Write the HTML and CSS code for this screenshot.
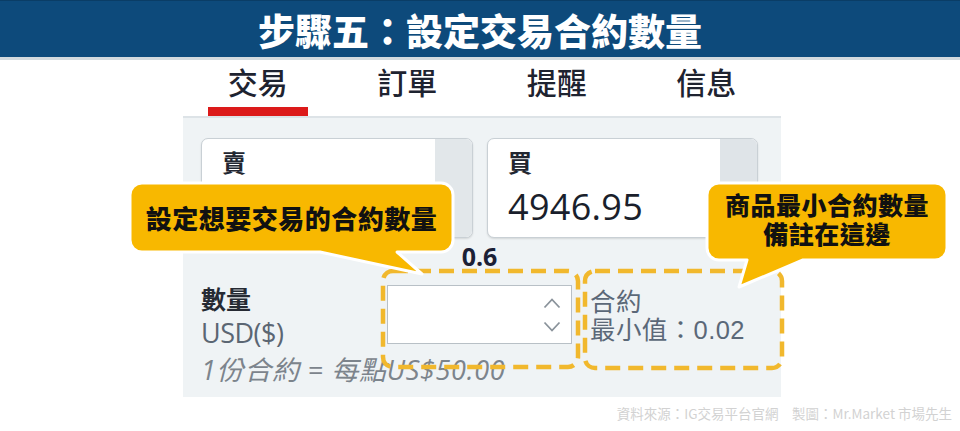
FILE: index.html
```html
<!DOCTYPE html>
<html lang="zh-Hant">
<head>
<meta charset="utf-8">
<title>步驟五：設定交易合約數量</title>
<link rel="stylesheet" href="styles.css">
</head>
<body>
<div class="page">
  <header class="banner"><h1 class="banner-title">步驟五：設定交易合約數量</h1></header>

  <main class="main">
    <nav class="tabs">
      <div class="tab tab-active"><span class="tab-label">交易</span><span class="tab-bar"></span></div>
      <div class="tab"><span class="tab-label">訂單</span></div>
      <div class="tab"><span class="tab-label">提醒</span></div>
      <div class="tab"><span class="tab-label">信息</span></div>
    </nav>

    <section class="panel">
      <div class="cards">
        <div class="card">
          <div class="card-body"><div class="card-label">賣</div></div>
          <div class="card-side card-side-sell"></div>
        </div>
        <div class="card">
          <div class="card-body"><div class="card-label">買</div><div class="card-price">4946.95</div></div>
          <div class="card-side"></div>
        </div>
      </div>

      <div class="qty-value-row"><span class="qty-value">0.6</span></div>

      <div class="qty-row">
        <div class="qty-labels">
          <div class="qty-title">數量</div>
          <div class="qty-unit">USD($)</div>
        </div>
        <div class="qty-input">
          <svg class="spin" width="18" height="40" viewBox="0 0 18 40">
            <polyline points="1.5,12.5 9,4.5 16.5,12.5" fill="none" stroke="#8a939b" stroke-width="1.8"/>
            <polyline points="1.5,27.5 9,35.5 16.5,27.5" fill="none" stroke="#8a939b" stroke-width="1.8"/>
          </svg>
        </div>
        <div class="qty-note">
          <div>合約</div>
          <div>最小值：0.02</div>
        </div>
      </div>
      <div class="qty-hint">1份合約 = 每點US$50.00</div>
    </section>
  </main>

  <footer class="credit">資料來源：IG交易平台官網　製圖：Mr.Market 市場先生</footer>

  <svg class="dash dash-1" width="203" height="104" viewBox="0 0 203 104">
    <rect x="4" y="4" width="195" height="96" rx="10" fill="none" stroke="#f1b82d" stroke-width="4.5" stroke-dasharray="15 8"/>
  </svg>
  <svg class="dash dash-2" width="205" height="105" viewBox="0 0 205 105">
    <rect x="4" y="4" width="197" height="97" rx="10" fill="none" stroke="#f1b82d" stroke-width="4.5" stroke-dasharray="15 8"/>
  </svg>

  <div class="callout callout-1">
    <svg class="callout-shape" width="329" height="100" viewBox="-3 -3 329 100">
      <path d="M12,0 H311 A12,12 0 0 1 323,12 V57 A12,12 0 0 1 311,69 H267 L292,91 L190,69 H12 A12,12 0 0 1 0,57 V12 A12,12 0 0 1 12,0 Z" fill="#f8b800" stroke="#ffffff" stroke-width="3" stroke-linejoin="round"/>
    </svg>
    <div class="callout-text">設定想要交易的合約數量</div>
  </div>

  <div class="callout callout-2">
    <svg class="callout-shape" width="246" height="110" viewBox="-3 -3 246 110">
      <path d="M12,0 H228 A12,12 0 0 1 240,12 V65 A12,12 0 0 1 228,77 H96 L32,104 L40,77 H12 A12,12 0 0 1 0,65 V12 A12,12 0 0 1 12,0 Z" fill="#f8b800" stroke="#ffffff" stroke-width="3" stroke-linejoin="round"/>
    </svg>
    <div class="callout-text callout-text-2"><span class="callout-line">商品最小合約數量</span><span class="callout-line">備註在這邊</span></div>
  </div>
</div>
</body>
</html>
```

FILE: styles.css
```css
* { box-sizing: border-box; }
html, body { margin: 0; padding: 0; background: #ffffff; }
body {
  font-family: "Noto Sans", "Noto Sans CJK TC", sans-serif;
  color: #1f2433;
}
.page {
  position: relative;
  width: 960px;
  height: 431px;
  overflow: hidden;
  background: #ffffff;
}

/* banner */
.banner {
  height: 60px;
  background: #0d4a7b;
  border-top: 1px solid #0a3d66;
  border-bottom: 3px solid #d3dade;
  display: flex;
  align-items: center;
  justify-content: center;
}
.banner-title {
  margin: 0;
  font-family: "Noto Sans CJK TC", sans-serif;
  font-weight: 900;
  font-size: 37px;
  line-height: 40px;
  color: #ffffff;
  padding-top: 1px;
}

/* main */
.main {
  margin-left: 183px;
  width: 598px;
}
.tabs {
  display: flex;
  height: 56px;
}
.tab {
  width: 150px;
  display: flex;
  flex-direction: column;
  align-items: center;
}
.tab-label {
  font-family: "Noto Sans CJK TC", sans-serif;
  font-weight: 500;
  font-size: 30px;
  line-height: 36px;
  margin-top: 3px;
  color: #1e2330;
}
.tab-bar {
  margin-top: auto;
  width: 100px;
  height: 9px;
  background: #dc1a1a;
}

/* panel */
.panel {
  height: 281px;
  background: #eff3f5;
  border-top: 2px solid #dde3e7;
  padding: 20px 23px 0 18px;
}
.cards {
  display: grid;
  grid-template-columns: 272px 271px;
  column-gap: 14px;
}
.card {
  height: 100px;
  background: #ffffff;
  border: 1px solid #c9d0d5;
  border-radius: 7px;
  box-shadow: 0 1px 2px rgba(0, 0, 0, 0.12);
  display: grid;
  grid-template-columns: 1fr 37px;
  overflow: hidden;
}
.card-body {
  padding: 6px 0 0 20px;
}
.card-side {
  background: #dfe4e8;
}
.card-side-sell { background: #e2e7ea; }
.card-label {
  font-family: "Noto Sans CJK TC", sans-serif;
  font-weight: 700;
  font-size: 24px;
  line-height: 34px;
  color: #222630;
}
.card-price {
  font-family: "Open Sans", sans-serif;
  font-size: 36px;
  line-height: 46px;
  color: #1a1f2c;
  margin-top: 5px;
  letter-spacing: 0.3px;
}

.qty-value-row {
  display: flex;
  padding-left: 186px;
  width: 371px;
  justify-content: center;
  height: 34px;
  margin-top: 1px;
}
.qty-value {
  font-family: "Open Sans", sans-serif;
  font-weight: 700;
  font-size: 25px;
  line-height: 34px;
  color: #1b2035;
}

.qty-row {
  display: grid;
  grid-template-columns: 186px 185px 1fr;
  margin-top: 12px;
  align-items: start;
}
.qty-labels {
  margin-top: -1px;
}
.qty-title {
  font-family: "Liberation Sans", "Noto Sans CJK TC", sans-serif;
  font-weight: 700;
  font-size: 25px;
  line-height: 32px;
  color: #262a33;
}
.qty-unit {
  font-family: "Open Sans", "Noto Sans CJK TC", sans-serif;
  font-size: 27px;
  line-height: 37px;
  color: #5b6673;
  letter-spacing: -0.5px;
  margin-top: -2px;
}
.qty-input {
  height: 59px;
  background: #ffffff;
  border: 1px solid #b8c0c6;
  display: flex;
  align-items: center;
  justify-content: flex-end;
  padding-right: 10px;
}
.spin { display: block; }
.qty-note {
  margin-left: 18px;
  font-family: "Liberation Sans", "Noto Sans CJK TC", sans-serif;
  font-size: 25.5px;
  line-height: 28px;
  color: #5b6878;
  padding-top: 3px;
  letter-spacing: 0.4px;
}
.qty-hint {
  font-family: "Open Sans", "Noto Sans CJK TC", sans-serif;
  font-style: italic;
  font-size: 27px;
  line-height: 34px;
  color: #7c848c;
  margin-top: 2px;
  letter-spacing: 0.7px;
}

/* footer credit */
.credit {
  text-align: right;
  padding-right: 8px;
  margin-top: 8px;
  font-family: "Noto Sans CJK TC", sans-serif;
  font-size: 13.5px;
  line-height: 16px;
  color: #d2d2d2;
}

/* overlays: dashed highlight boxes */
.dash {
  position: absolute;
  display: block;
}
.dash-1 { left: 379px; top: 267px; }
.dash-2 { left: 581px; top: 267px; }

/* overlays: callouts */
.callout {
  position: absolute;
}
.callout-1 { left: 130px; top: 183px; width: 323px; height: 69px; }
.callout-2 { left: 707px; top: 183px; width: 240px; height: 77px; }
.callout-shape {
  position: absolute;
  left: -3px;
  top: -3px;
  display: block;
}
.callout-text {
  position: relative;
  height: 100%;
  display: flex;
  flex-direction: column;
  align-items: center;
  justify-content: center;
  text-align: center;
  font-family: "Noto Sans CJK TC", sans-serif;
  font-weight: 900;
  font-size: 26px;
  line-height: 29px;
  color: #111111;
  letter-spacing: 0.5px;
}
.callout-text-2 {
  font-family: "Liberation Sans", "Noto Sans CJK TC", sans-serif;
  font-size: 25px;
  padding-bottom: 2px;
}
.callout-line {
  display: block;
  height: 29px;
  line-height: 29px;
}
```
